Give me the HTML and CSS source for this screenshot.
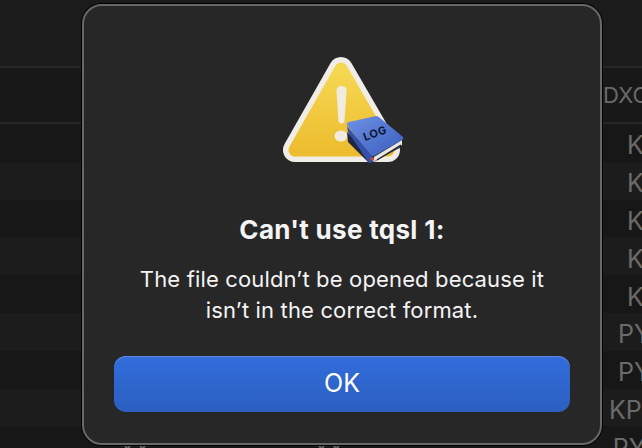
FILE: index.html
```html
<!DOCTYPE html>
<html lang="en">
<head>
  <meta charset="UTF-8">
  <title>Can't use tqsl 1</title>
  <link rel="stylesheet" href="styles.css">
</head>
<body>

  <!-- Log table behind the alert -->
  <div class="table">
    <div class="toolbar"></div>
    <div class="table-head">
      <span class="tick"></span>
      <span class="head-label">DXC</span>
    </div>
    <div class="row"><span class="call call-k">K</span></div>
    <div class="row row-alt"><span class="call call-k">K</span></div>
    <div class="row"><span class="call call-k">K</span></div>
    <div class="row row-alt"><span class="call call-k">K</span></div>
    <div class="row"><span class="call call-k">K</span></div>
    <div class="row row-alt"><span class="call call-py">PY</span></div>
    <div class="row"><span class="call call-py">PY</span></div>
    <div class="row row-alt"><span class="call call-kp">KP</span></div>
    <div class="row row-last">
      <span class="mode mode-a">YY</span>
      <span class="mode mode-b">YY</span>
      <span class="call call-py-last">PY</span>
    </div>
  </div>

  <!-- Alert -->
  <div class="dialog">
    <svg class="alert-icon" width="130" height="120" viewBox="0 0 130 120">
      <defs>
        <linearGradient id="yellow" x1="0" y1="0" x2="0" y2="1">
          <stop offset="0" stop-color="#f5d852"/>
          <stop offset="1" stop-color="#edbd30"/>
        </linearGradient>
        <linearGradient id="cover" x1="0" y1="0" x2="1" y2="1">
          <stop offset="0" stop-color="#6d92e6"/>
          <stop offset="1" stop-color="#3a5cbc"/>
        </linearGradient>
      </defs>
      <polygon points="61,19 15,100 108,100" fill="#f0ece6" stroke="#f0ece6" stroke-width="24" stroke-linejoin="round"/>
      <polygon points="61,19 15,100 108,100" fill="url(#yellow)" stroke="url(#yellow)" stroke-width="13" stroke-linejoin="round"/>
      <path d="M56.500 41 Q56.500 36 61.500 36 Q66.500 36 66.500 41 L64.500 71 Q64 73.500 61.500 73.500 Q59 73.500 58.500 71 Z" fill="#f1ecdf"/>
      <ellipse cx="61" cy="86" rx="6.500" ry="5.500" fill="#f1ecdf"/>
      <!-- book -->
      <path d="M67 82 L68 92 L90 114 L123 96 L122 88 L93 106 Z" fill="#20283f"/>
      <path d="M94 107 L122 90 L122 95 L93 112 Z" fill="#e9e7e0"/>
      <path d="M97 110 L121 95" stroke="#20202a" stroke-width="1.200"/>
      <path d="M67 75 Q66 73 69 72 L96 66 Q98 66 100 68 L123 87 Q124 89 122 90 L94 106 Q92 107 90 105 Z" fill="url(#cover)"/>
      <path d="M68 82 L89 113 L93 112 L92 106 L67 76 Z" fill="#3450a8"/>
      <circle cx="92" cy="109" r="1.800" fill="#c8443c"/>
      <text class="book-label" x="95" y="87" transform="rotate(-20 95 83)">LOG</text>
    </svg>
    <h1 class="title">Can't use tqsl 1:</h1>
    <p class="message">The file couldn’t be opened because it<br>isn’t in the correct format.</p>
    <button class="ok-btn">OK</button>
  </div>

</body>
</html>
```

FILE: styles.css
```css
html, body {
  margin: 0;
  height: 100%;
}
body {
  position: relative;
  overflow: hidden;
  background: #161616;
  font-family: Inter, "Liberation Sans", sans-serif;
}

/* Table behind the dialog */
.toolbar {
  height: 66px;
  background: #1b1b1b;
}
.table-head {
  display: flex;
  align-items: center;
  height: 54px;
  border-top: 2px solid #262626;
  border-bottom: 2px solid #262626;
  background: #181818;
}
.tick {
  width: 1px;
  height: 32px;
  margin-left: 37px;
  background: #2c2c2c;
}
.head-label {
  margin-left: 566px;
  font-size: 22px;
  color: #6a6a6a;
  white-space: nowrap;
}
.row {
  display: flex;
  align-items: center;
  box-sizing: border-box;
  height: 37.8px;
  padding-top: 5px;
  background: #171717;
  font-size: 25px;
  color: #6a6a6a;
  white-space: nowrap;
}
.row-alt {
  background: #1c1c1c;
}
.call-k {
  margin-left: 627px;
}
.call-py {
  margin-left: 618px;
}
.call-kp {
  margin-left: 609px;
}
.row-last {
  font-size: 22px;
}
.mode-a {
  margin-left: 120px;
}
.mode-b {
  margin-left: 164px;
}
.call-py-last {
  margin-left: 269px;
  font-size: 25px;
}

/* Alert */
.dialog {
  position: absolute;
  left: 82px;
  top: 4px;
  width: 520px;
  height: 441px;
  box-sizing: border-box;
  display: flex;
  flex-direction: column;
  align-items: center;
  padding-top: 44px;
  background: #282728;
  border: 2px solid #686868;
  border-radius: 20px;
  box-shadow: 0 0 0 1px #000;
  color: #f4f4f4;
  text-align: center;
}
.alert-icon {
  display: block;
  flex: none;
  margin-left: 6px;
}
.book-label {
  font-size: 11px;
  font-weight: 700;
  fill: #0d1530;
  text-anchor: middle;
  letter-spacing: 0.5px;
}
.title {
  margin: 45px 0 0;
  font-size: 26px;
  line-height: 30px;
  font-weight: 700;
  letter-spacing: 0.3px;
}
.message {
  margin: 19px 0 0;
  font-size: 22px;
  line-height: 31px;
  font-weight: 400;
  letter-spacing: 0.15px;
}
.ok-btn {
  width: 456px;
  height: 56px;
  margin-top: 30px;
  padding: 0 0 3px;
  flex: none;
  border: none;
  border-radius: 12px;
  background: linear-gradient(#326ddc, #2b5fc0);
  box-shadow: inset 0 1px 0 #5d8be0;
  color: #fff;
  font-family: inherit;
  font-size: 25px;
}
```
